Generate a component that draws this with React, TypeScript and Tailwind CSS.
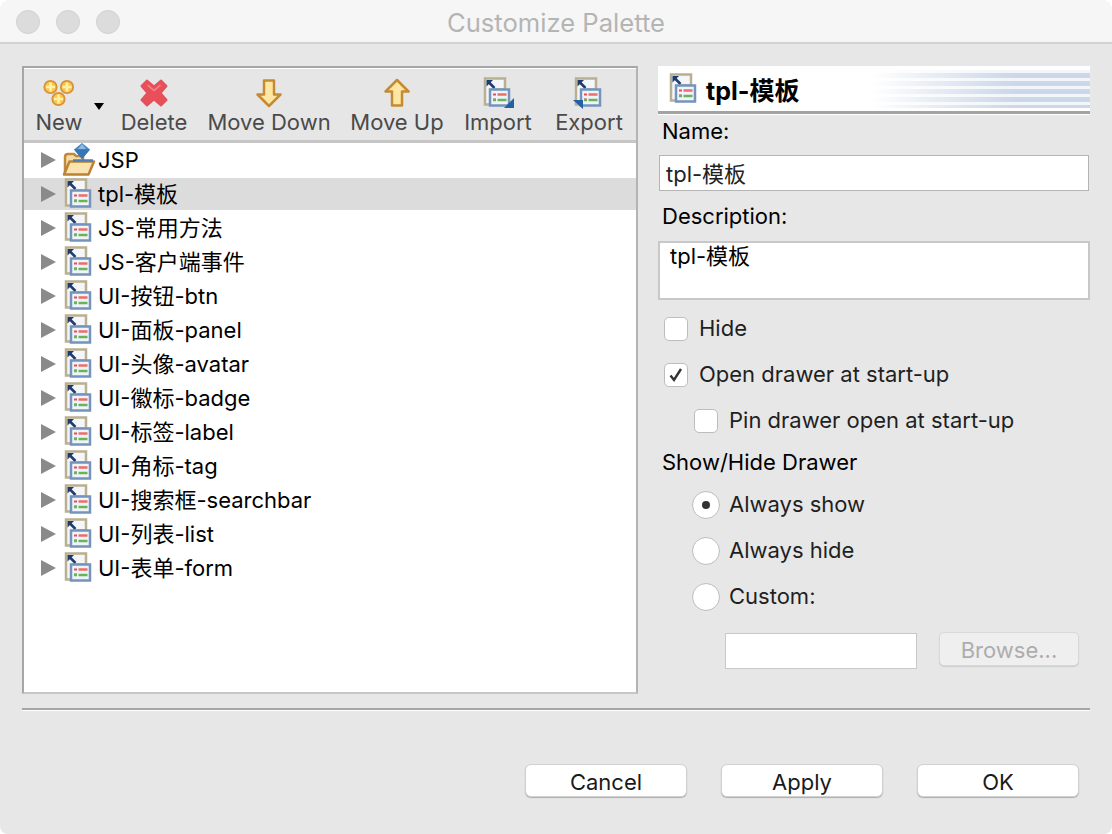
import React from 'react';

const latin = "font-['Inter','Noto_Sans_CJK_SC',sans-serif]";

const treeItems = [
  'tpl-模板',
  'JS-常用方法',
  'JS-客户端事件',
  'UI-按钮-btn',
  'UI-面板-panel',
  'UI-头像-avatar',
  'UI-徽标-badge',
  'UI-标签-label',
  'UI-角标-tag',
  'UI-搜索框-searchbar',
  'UI-列表-list',
  'UI-表单-form',
];

function PaletteIcon({ variant }: { variant?: 'import' | 'export' }) {
  return (
    <svg width="32" height="32" viewBox="0 0 32 32" className="block">
      <path d="M3 1.500h20v11H11v15H3z" fill="#f4f6f9" stroke="#b8b091" strokeWidth="2.500" />
      <path d="M6 4.500l6.500 6.500" fill="none" stroke="#1f3b6e" strokeWidth="2.500" />
      <path d="M4.500 3h6.500l-6.500 6.500z" fill="#1f3b6e" />
      <rect x="8" y="12.500" width="19" height="16" fill="#f0f4fa" stroke="#7494bd" strokeWidth="2.500" />
      <path d="M11 17.500h3M11 22.500h3" stroke="#e0514e" strokeWidth="2" />
      <path d="M15.500 17.500h9" stroke="#ea6f69" strokeWidth="2.500" />
      <path d="M11 23h3M15.500 23h9" stroke="#69b35b" strokeWidth="2.500" />
      {variant === 'import' && <path d="M32 21v10h-10z" fill="#2361a5" />}
      {variant === 'export' && <path d="M0 23h10v9z" fill="#2361a5" />}
    </svg>
  );
}

function FolderIcon() {
  return (
    <svg width="34" height="34" viewBox="0 0 34 34" className="block">
      <path d="M3 30V14c0-2 1-3 3-3h6l2 2h7v6" fill="#f5dca6" stroke="#c08a3e" strokeWidth="2.500" />
      <path d="M2 31.500l5.500-13H32l-5.500 13z" fill="#fae3ae" stroke="#bb8238" strokeWidth="2.500" strokeLinejoin="round" />
      <path d="M20 0l8 6.500-8 9.500-8-9.500z" fill="#4a86c5" />
      <path d="M12 6.500h16l-8 9.500z" fill="#3775b5" />
      <path d="M20 1l4 5h-8z" fill="#8fbbe3" />
      <path d="M11 17.500h20" stroke="#4a7fb8" strokeWidth="2.500" />
    </svg>
  );
}

function PlusIcons() {
  const plus = (cx: number, cy: number) => (
    <g key={`${cx}-${cy}`}>
      <circle cx={cx} cy={cy} r="6.200" fill="#f9c84a" stroke="#d8923a" strokeWidth="1.800" />
      <path d={`M${cx - 4.500} ${cy}h9M${cx} ${cy - 4.500}v9`} stroke="#fff0a8" strokeWidth="2.600" />
    </g>
  );
  return (
    <svg width="32" height="28" viewBox="0 0 32 28" className="block">
      {plus(7.500, 8)}
      {plus(24, 8)}
      {plus(15.500, 20)}
    </svg>
  );
}

function DeleteIcon() {
  return (
    <svg width="28" height="28" viewBox="0 0 28 28" className="block">
      <path d="M7 1.500l7 6 7-6 5.500 5.500-6 7 6 7-5.500 5.500-7-6-7 6L1.500 21l6-7-6-7z" fill="#ea4f59" stroke="#e0525c" strokeWidth="2" strokeLinejoin="round" />
      <path d="M7.500 6l6.500 5.500L20.500 6" fill="none" stroke="#f4868c" strokeWidth="1.500" />
    </svg>
  );
}

function ArrowIcon({ up }: { up?: boolean }) {
  return (
    <svg width="26" height="30" viewBox="0 0 26 30" className="block">
      <path
        d={up ? 'M13 2L24.500 13.500H18v14H8v-14H1.500z' : 'M13 28L24.500 16.500H18v-14H8v14H1.500z'}
        fill="#fde7a3"
        stroke="#c58a33"
        strokeWidth="2.500"
        strokeLinejoin="round"
      />
    </svg>
  );
}

function ToolButton({ label, icon, w }: { label: string; icon: React.ReactNode; w: string }) {
  return (
    <div className={`${w} flex flex-col items-center`}>
      <div className="h-[32px] flex items-center justify-center">{icon}</div>
      <span className="text-[22px] leading-[26px] text-[#4a4a4a] whitespace-nowrap">{label}</span>
    </div>
  );
}

function Triangle() {
  return <div className="w-0 h-0 border-y-[8px] border-y-transparent border-l-[15px] border-l-[#8a8a8a]" />;
}

function TreeRow({ label, icon, selected, h }: { label: string; icon: React.ReactNode; selected?: boolean; h: string }) {
  return (
    <div className={`${h} flex items-center pl-[17px] ${selected ? 'bg-[#dcdcdc]' : ''}`}>
      <Triangle />
      <div className="ml-[6px] w-[34px] flex justify-center">{icon}</div>
      <span className="ml-[2px] text-[22px] leading-[26px] text-black whitespace-nowrap">{label}</span>
    </div>
  );
}

function CheckBox({ checked }: { checked?: boolean }) {
  return (
    <div className="w-[24px] h-[24px] rounded-[5px] bg-white border border-[#bdbdbd] flex items-center justify-center">
      {checked && (
        <svg width="16" height="16" viewBox="0 0 16 16">
          <path d="M2.500 8.500l3.500 4.500 7-11" fill="none" stroke="#333" strokeWidth="2.400" />
        </svg>
      )}
    </div>
  );
}

function Radio({ checked }: { checked?: boolean }) {
  return (
    <div className="w-[28px] h-[28px] rounded-full bg-white border border-[#bdbdbd] flex items-center justify-center">
      {checked && <div className="w-[8px] h-[8px] rounded-full bg-[#333]" />}
    </div>
  );
}

function ActionButton({ label }: { label: string }) {
  return (
    <button className="w-[162px] h-[33px] pt-[2px] rounded-[6px] bg-white border border-[#d0d0d0] shadow-[0_1px_1px_rgba(0,0,0,0.25)] text-[22px] leading-[26px] text-[#1a1a1a]">
      {label}
    </button>
  );
}

export default function App() {
  return (
    <div className={`${latin} w-[1112px] h-[834px] bg-[#e7e7e7] overflow-hidden flex flex-col rounded-t-[10px] rounded-b-[8px]`}>
      {/* Title bar */}
      <div className="relative h-[44px] shrink-0 bg-[#f6f6f6] border-b-2 border-[#d2d2d2] flex items-center justify-center">
        <div className="absolute left-[16px] top-[10px] flex gap-[16px]">
          <div className="w-[24px] h-[24px] rounded-full bg-[#dcdcdc] border border-[#d0d0d0]" />
          <div className="w-[24px] h-[24px] rounded-full bg-[#dcdcdc] border border-[#d0d0d0]" />
          <div className="w-[24px] h-[24px] rounded-full bg-[#dcdcdc] border border-[#d0d0d0]" />
        </div>
        <span className="mt-[4px] text-[25.6px] leading-[28px] text-[#b4b4b4]">Customize Palette</span>
      </div>

      <div className="flex-1 flex flex-col px-[22px]">
        <div className="flex mt-[22px] h-[628px]">
          {/* Left panel */}
          <div className="w-[616px] shrink-0 flex flex-col border-2 border-[#a6a6a6] border-r-[#b4b4b4] border-b-[#c6c6c6]">
            <div className="h-[75px] shrink-0 border-t border-white bg-[#e6e6e6] border-b-[3px] border-b-[#c6c6c6] flex pt-[8px] pl-[13px]">
              <div className="relative w-[70px]">
                <ToolButton label="New" w="w-[44px]" icon={<PlusIcons />} />
                <div className="absolute left-[57px] top-[26px] w-0 h-0 border-x-[5px] border-x-transparent border-t-[7px] border-t-black" />
              </div>
              <ToolButton label="Delete" w="w-[78px] ml-[8px]" icon={<DeleteIcon />} />
              <ToolButton label="Move Down" w="w-[122px] ml-[15px]" icon={<ArrowIcon />} />
              <ToolButton label="Move Up" w="w-[94px] ml-[20px]" icon={<ArrowIcon up />} />
              <ToolButton label="Import" w="w-[70px] ml-[19px]" icon={<PaletteIcon variant="import" />} />
              <ToolButton label="Export" w="w-[70px] ml-[21px]" icon={<PaletteIcon variant="export" />} />
            </div>
            <div className="flex-1 bg-white">
              <TreeRow label="JSP" icon={<FolderIcon />} h="h-[35px] pb-[1px]" />
              {treeItems.map((item, i) => (
                <TreeRow key={item} label={item} icon={<PaletteIcon />} selected={i === 0} h={i === 0 ? 'h-[32px] mb-[1px]' : 'h-[34px]'} />
              ))}
            </div>
          </div>

          {/* Right panel */}
          <div className="ml-[20px] w-[432px] flex flex-col">
            <div className="relative h-[48px] shrink-0 bg-white border-b-[3px] border-[#a3a3a3] flex items-center pl-[10px] overflow-hidden">
              <PaletteIcon />
              <span className="ml-[6px] mt-[5px] text-[25px] leading-[28px] font-bold text-black">tpl-模板</span>
              <div className="absolute right-0 top-[4px] w-[220px] h-[38px] bg-[repeating-linear-gradient(180deg,#f2f5f9_0px,#f2f5f9_3px,#ccd7e8_3px,#ccd7e8_8px)] [mask-image:linear-gradient(90deg,transparent,black_65%)]" />
            </div>
            <div className="h-[1px] bg-white shrink-0" />
            <div className="mt-[3px] text-[22px] leading-[26px] text-black pl-[4px]">Name:</div>
            <div className="mt-[11px] mx-[1px] h-[36px] bg-white border border-[#b4b4b4] flex items-center pl-[6px] pt-[2px] text-[22px] leading-[26px] text-[#222]">tpl-模板</div>
            <div className="mt-[12px] text-[22px] leading-[26px] text-black pl-[4px]">Description:</div>
            <div className="mt-[12px] h-[59px] bg-white border-2 border-[#c8c8c8] pl-[10px] text-[22px] leading-[26px] text-black">tpl-模板</div>

            <div className="mt-[17px] pl-[6px] h-[24px] flex items-center">
              <CheckBox />
              <span className="ml-[11px] mb-[2px] text-[22px] leading-[26px] text-[#1f1f1f]">Hide</span>
            </div>
            <div className="mt-[22px] pl-[6px] h-[24px] flex items-center">
              <CheckBox checked />
              <span className="ml-[11px] mb-[2px] text-[22px] leading-[26px] text-[#1f1f1f]">Open drawer at start-up</span>
            </div>
            <div className="mt-[22px] pl-[36px] h-[24px] flex items-center">
              <CheckBox />
              <span className="ml-[11px] mb-[2px] text-[22px] leading-[26px] text-[#1f1f1f]">Pin drawer open at start-up</span>
            </div>
            <div className="mt-[16px] mb-[1px] pl-[4px] text-[22px] leading-[26px] text-black">Show/Hide Drawer</div>
            {['Always show', 'Always hide', 'Custom:'].map((label, i) => (
              <div key={label} className={`${i === 0 ? 'mt-[15px]' : 'mt-[18px]'} pl-[34px] h-[28px] flex items-center`}>
                <Radio checked={i === 0} />
                <span className="ml-[9px] mb-[2px] text-[22px] leading-[26px] text-[#1f1f1f]">{label}</span>
              </div>
            ))}
            <div className="mt-[22px] pl-[67px] flex items-start">
              <div className="w-[192px] h-[36px] bg-white border border-[#c8c8c8]" />
              <button className="ml-[22px] -mt-[1px] w-[140px] h-[34px] pt-[2px] rounded-[5px] bg-[#efefef] border border-[#d8d8d8] shadow-[0_1px_1px_rgba(0,0,0,0.12)] text-[22px] leading-[26px] text-[#adadad]">Browse...</button>
            </div>
          </div>
        </div>

        <div className="mt-[14px] h-[3px] shrink-0 bg-[#a6a6a6] border-b border-white" />
        <div className="mt-[53px] pr-[11px] flex justify-end gap-[34px]">
          <ActionButton label="Cancel" />
          <ActionButton label="Apply" />
          <ActionButton label="OK" />
        </div>
      </div>
    </div>
  );
}
